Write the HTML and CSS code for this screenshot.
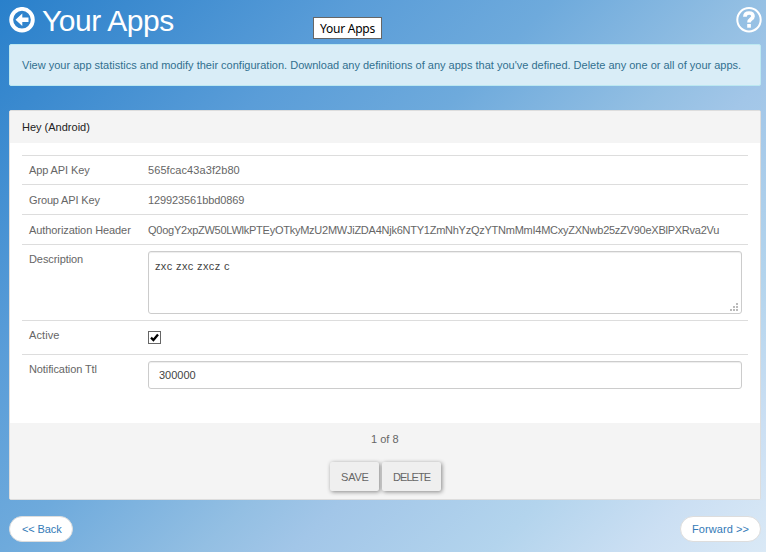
FILE: index.html
```html
<!DOCTYPE html>
<html lang="en">
<head>
<meta charset="utf-8">
<title>Your Apps</title>
<link rel="stylesheet" href="styles.css">
</head>
<body>
<header class="top">
  <svg class="icon" viewBox="0 0 26 26"><circle cx="13" cy="12.7" r="10.8" fill="none" stroke="#fff" stroke-width="3.9"/><path d="M6.5 12.8L13.3 6.5V10.5H19.5V15H13.3V19Z" fill="#fff"/></svg>
  <h1><span class="t-title">Your Apps</span></h1>
  <svg class="icon help" viewBox="0 0 26 26"><circle cx="13" cy="12.7" r="11.7" fill="none" stroke="#fff" stroke-width="2"/><path d="M8.9 9.7C9 6.9 10.7 6 13 6C15.4 6 17 7.3 17 9.3C17 12.3 13 11.8 13 15.4" fill="none" stroke="#fff" stroke-width="3.7"/><rect x="11.2" y="17" width="3.7" height="3.7" fill="#fff"/></svg>
</header>
<div class="tooltip">Your Apps</div>
<div class="alert"><span class="t-alert">View your app statistics and modify their configuration. Download any definitions of any apps that you've defined. Delete any one or all of your apps.</span></div>
<main class="panel">
  <div class="heading"><span class="t-head">Hey (Android)</span></div>
  <div class="body">
    <div class="row r1"><label><span class="t-app">App API Key</span></label><span class="t-key">565fcac43a3f2b80</span></div>
    <div class="row r2"><label><span class="t-group">Group API Key</span></label><span class="t-gkey">129923561bbd0869</span></div>
    <div class="row r2"><label><span class="t-auth">Authorization Header</span></label><span class="t-token">Q0ogY2xpZW50LWlkPTEyOTkyMzU2MWJiZDA4Njk6NTY1ZmNhYzQzYTNmMmI4MCxyZXNwb25zZV90eXBlPXRva2Vu</span></div>
    <div class="row r3"><label><span class="t-desc">Description</span></label><div class="area"><span class="t-zxc">zxc zxc zxcz c</span><svg class="grip" width="8" height="8" viewBox="0 0 8 8"><path d="M6 0h2v2h-2zM3 3h2v2h-2zM6 3h2v2h-2zM0 6h2v2h-2zM3 6h2v2h-2zM6 6h2v2h-2z" fill="#bbb"/></svg></div></div>
    <div class="row r4"><label><span class="t-active">Active</span></label><svg class="check" width="13" height="13" viewBox="0 0 13 13"><rect x=".5" y=".5" width="12" height="12" fill="#fff" stroke="#666"/><path d="M3 6.7L5.4 9L10 3.5" fill="none" stroke="#000" stroke-width="2.3"/></svg></div>
    <div class="row r5"><label><span class="t-ttl">Notification Ttl</span></label><div class="input"><span class="t-num">300000</span></div></div>
  </div>
  <footer class="foot">
    <div class="count"><span class="t-count">1 of 8</span></div>
    <div class="buttons"><span class="btn save"><span class="t-save">SAVE</span></span><span class="btn delete"><span class="t-delete">DELETE</span></span></div>
  </footer>
</main>
<nav class="pager"><a class="back"><span class="t-back">&lt;&lt; Back</span></a><a class="forward"><span class="t-fwd">Forward &gt;&gt;</span></a></nav>
</body>
</html>
```
FILE: styles.css
```css
* { box-sizing: border-box; }
body {
  margin: 0; padding: 0 5px 0 9px; width: 766px; height: 552px; overflow: hidden;
  font: 11px/16px "Liberation Sans", Arial, sans-serif; color: #666; white-space: nowrap;
  background: linear-gradient(135deg, #2980cb 0%, #3b8acf 10%, #5a9dd8 27%, #6eaadc 42%, #93bfe3 57%, #a2c6e8 64%, #b3d4ed 79%, #cbdff3 90%, #dae9f6 100%);
}
.top { height: 44px; display: flex; align-items: flex-start; padding-top: 7px; }
.icon { width: 26px; height: 26px; flex: none; }
.help { margin-left: auto; margin-right: -1px; }
h1 { margin: -3px 0 0 7px; font-size: 30px; line-height: 33px; font-weight: 400; color: #fff; }
.tooltip {
  position: absolute; left: 313px; top: 17px; width: 69px; height: 22px; border: 1px solid #666;
  background: #fff; color: #000; font: 12px/22px "Noto Sans", sans-serif; text-align: center; letter-spacing: -.25px;
}
.alert { height: 42px; border: 1px solid #bce8f1; border-radius: 2px; background: #d9edf7; color: #31708f; padding: 12px 12px; }
.panel { margin-top: 24px; height: 390px; border: 1px solid #ddd; border-radius: 2px; background: #fff; overflow: hidden; }
.heading { height: 32px; background: #f4f4f4; color: #222; padding: 8px 12px; }
.body { height: 280px; padding: 12px 12px 0; }
.row { display: flex; border-top: 1px solid #ddd; padding: 7px 6px 0 7px; }
.row label { width: 119px; flex: none; }
.r1 { height: 29px; padding-top: 6px; }
.r2 { height: 30px; }
.r3 { height: 76px; padding-top: 6px; }
.r4 { height: 34px; padding-top: 6px; }
.r5 { height: 68px; padding-top: 6px; }
.area, .input { flex: 1; border: 1px solid #ccc; border-radius: 3px; box-shadow: inset 0 1px 1px rgba(0,0,0,.075); color: #444; }
.area { position: relative; height: 63px; padding: 6px 6px; }
.grip { position: absolute; right: 3px; bottom: 2px; }
.input { height: 28px; padding: 5px 10px; }
.check { margin-top: 4px; }
.foot { height: 76px; background: #f4f4f4; }
.count { padding-top: 8px; height: 39px; padding-left: 361px; }
.buttons { display: flex; gap: 3px; padding-left: 320px; }
.btn { height: 29px; border-radius: 2px; background: #efefef; box-shadow: 1px 1px 4px rgba(0,0,0,.45); padding: 7px 0 0 11px; }
.save { width: 49px; }
.delete { width: 59px; padding-left: 11px; }
.pager { display: flex; justify-content: space-between; margin-top: 16px; }
.pager a { height: 26px; border: 1px solid #ddd; border-radius: 13px; background: #fff; color: #337ab7; padding: 4px 12px; }
.pager .back { width: 64px; }
.pager .forward { width: 81px; padding-left: 11px; }
.t-title { letter-spacing: -.42px; }
.t-app { letter-spacing: -.1px; }
.t-key { letter-spacing: .08px; }
.t-group { letter-spacing: -.15px; }
.t-gkey { letter-spacing: -.1px; }
.t-auth { letter-spacing: -.08px; }
.t-token { letter-spacing: -.248px; }
.t-zxc { letter-spacing: .37px; }
.t-desc { letter-spacing: -.08px; }
.t-active { letter-spacing: .1px; }
.t-ttl { letter-spacing: -.1px; }
.t-save { letter-spacing: -.2px; }
.t-delete { letter-spacing: -.95px; }
.t-back { letter-spacing: -.1px; }
.t-fwd { letter-spacing: .08px; }
```
